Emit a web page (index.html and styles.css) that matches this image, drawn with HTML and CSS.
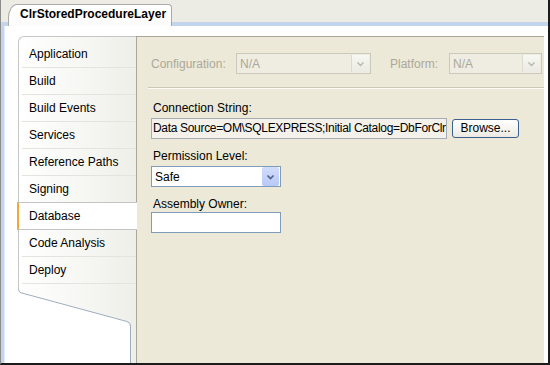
FILE: index.html
```html
<!DOCTYPE html>
<html>
<head>
    <title>ClrStoredProcedureLayer</title>
    <link rel="stylesheet" href="styles.css">
</head>
<body>
    <div class="window">
        <div class="doc-tabs">
            <div class="doc-tab">ClrStoredProcedureLayer</div>
        </div>

        <div class="doc">
            <div class="pages">
                <div class="side">
                    <div class="side-list">
                        <div class="side-item">Application</div>
                        <div class="side-item">Build</div>
                        <div class="side-item">Build Events</div>
                        <div class="side-item">Services</div>
                        <div class="side-item">Reference Paths</div>
                        <div class="side-item">Signing</div>
                        <div class="side-item selected">Database</div>
                        <div class="side-item">Code Analysis</div>
                        <div class="side-item">Deploy</div>
                    </div>
                    <div class="side-tail">
                        <svg width="118" height="100" viewBox="0 0 118 100">
                            <defs>
                                <linearGradient id="sideGrad" x1="0" y1="0" x2="1" y2="0">
                                    <stop offset="0" stop-color="#ffffff"/>
                                    <stop offset="1" stop-color="#efefe9"/>
                                </linearGradient>
                            </defs>
                            <path d="M0 0 H118 V100 H112.5 V42 Q112.5 38.5 109 37.5 L3 8.8 Q0 8 0 5 Z" fill="url(#sideGrad)"/>
                            <path d="M0.5 0 V5" stroke="#c6c6c6" fill="none"/>
                            <path d="M0.5 5 Q0.5 8 3 8.8 L109 37.5 Q112.5 38.5 112.5 42 V100" stroke="#9fadc0" fill="none"/>
                        </svg>
                    </div>
                </div>

                <div class="panel">
                    <div class="config-row muted">
                        <span class="config-label">Configuration:</span>
                        <div class="combo disabled config-combo">
                            <span class="combo-text">N/A</span>
                            <span class="combo-btn">
                                <svg width="9" height="6" viewBox="0 0 9 6"><path d="M1.5 1.5 L4.5 4.5 L7.5 1.5" stroke="#b9b7ab" stroke-width="1.4" fill="none"/></svg>
                            </span>
                        </div>
                        <span class="platform-label">Platform:</span>
                        <div class="combo disabled platform-combo">
                            <span class="combo-text">N/A</span>
                            <span class="combo-btn">
                                <svg width="9" height="6" viewBox="0 0 9 6"><path d="M1.5 1.5 L4.5 4.5 L7.5 1.5" stroke="#b9b7ab" stroke-width="1.4" fill="none"/></svg>
                            </span>
                        </div>
                    </div>

                    <div class="rule"></div>

                    <div class="form">
                        <div class="group">
                            <div class="field-label">Connection String:</div>
                            <div class="conn-row">
                                <div class="textbox conn">Data Source=OM\SQLEXPRESS;Initial Catalog=DbForClr</div>
                                <button class="browse">Browse...</button>
                            </div>
                        </div>

                        <div class="group">
                            <div class="field-label">Permission Level:</div>
                            <div class="combo safe">
                                <span class="combo-text">Safe</span>
                                <span class="combo-btn">
                                    <svg width="9" height="6" viewBox="0 0 9 6"><path d="M1.5 1.5 L4.5 4.5 L7.5 1.5" stroke="#4d6185" stroke-width="1.6" fill="none"/></svg>
                                </span>
                            </div>
                        </div>

                        <div class="group">
                            <div class="field-label owner-label">Assembly Owner:</div>
                            <div class="textbox owner"></div>
                        </div>
                    </div>
                </div>
            </div>
        </div>
    </div>
</body>
</html>
```

FILE: styles.css
```css
body {
    margin: 0;
    font-family: "Liberation Sans", Arial, sans-serif;
    font-size: 12px;
    color: #000;
}
.window {
    width: 550px;
    height: 365px;
    box-sizing: border-box;
    border-left: 1px solid #8c8c8c;
    border-right: 2px solid #1c1c1c;
    border-bottom: 2px solid #1c1c1c;
    background: #ecebe4;
    display: flex;
    flex-direction: column;
    overflow: hidden;
}
.doc-tabs {
    height: 22px;
    flex-shrink: 0;
    padding-left: 7px;
    display: flex;
    align-items: flex-end;
}
.doc-tab {
    position: relative;
    z-index: 1;
    width: 164px;
    height: 22px;
    margin-bottom: -4px;
    box-sizing: border-box;
    padding: 2px 0 0 11px;
    border: 1px solid #a9a9a9;
    border-bottom: none;
    border-radius: 9px 4px 0 0 / 14px 4px 0 0;
    background: linear-gradient(#ffffff, #fbfbfb);
    font-weight: bold;
    line-height: 14px;
    white-space: nowrap;
}
.doc {
    flex: 1;
    display: flex;
    min-height: 0;
    background: #fff;
    border-top: 4px solid #c3d5ed;
    border-left: 3px solid #c3d5ed;
    box-shadow: inset 1px 0 0 #e3ebf6;
    padding: 10px 4px 0 14px;
}
.pages {
    flex: 1;
    display: flex;
    min-height: 0;
}

/* left page list */
.side {
    width: 118px;
    flex-shrink: 0;
    display: flex;
    flex-direction: column;
}
.side-list {
    border-left: 1px solid #c6c6c6;
    border-top: 1px solid #c6c6c6;
    border-top-left-radius: 6px;
    background: linear-gradient(to right, #ffffff, #efefe9);
    padding-top: 4px;
}
.side-item {
    height: 26px;
    line-height: 26px;
    margin-left: 3px;
    padding-left: 7px;
    border-bottom: 1px solid #e4e4de;
    white-space: nowrap;
}
.side-item.selected {
    position: relative;
    z-index: 1;
    margin: -1px -1px 0 -2px;
    padding-left: 10px;
    background: #fff;
    border-top: 1px solid #c4c4c4;
    border-bottom: 1px solid #c4c4c4;
    border-left: 2px solid #f2a73a;
}
.side-tail {
    flex: 1;
    overflow: hidden;
}
.side-tail svg {
    display: block;
}

/* right panel */
.panel {
    flex: 1;
    background: #ece9d8;
    border-left: 1px solid #a7a698;
    border-top: 1px solid #a7a698;
}
.muted {
    color: #aca899;
}
.config-row {
    display: flex;
    align-items: center;
    padding: 16px 0 0 14px;
    height: 21px;
}
.config-label {
    width: 85px;
}
.platform-label {
    width: 59px;
    margin-left: 19px;
}
.combo {
    height: 21px;
    box-sizing: border-box;
    display: flex;
    align-items: center;
}
.combo-text {
    flex: 1;
    padding-left: 3px;
}
.combo-btn {
    width: 17px;
    height: 17px;
    margin-right: 1px;
    display: flex;
    align-items: center;
    justify-content: center;
}
.combo.disabled {
    border: 1px solid #cbc9bc;
    background: #efede2;
}
.combo.disabled .combo-btn {
    background: linear-gradient(#f7f7f3, #ebeae3);
    border-left: 1px solid #dddbd0;
}
.config-combo {
    width: 135px;
}
.platform-combo {
    width: 93px;
}
.rule {
    margin: 13px 0 0 11px;
    border-top: 1px solid #cbc8b8;
    border-bottom: 1px solid #fbfaf6;
}
.form {
    padding: 12px 0 0 14px;
}
.group + .group {
    margin-top: 10px;
}
.field-label {
    line-height: 14px;
    padding-left: 2px;
    margin-bottom: 3px;
}
.conn-row {
    display: flex;
    align-items: center;
    gap: 5px;
}
.textbox {
    height: 21px;
    box-sizing: border-box;
    line-height: 19px;
    white-space: nowrap;
    overflow: hidden;
}
.conn {
    width: 296px;
    padding-left: 1px;
    border: 1px solid #a5acb5;
    background: #f3f1ea;
    letter-spacing: -0.32px;
}
.browse {
    width: 67px;
    height: 19px;
    padding: 0;
    border: 1px solid #3d5f8e;
    border-radius: 3px;
    background: linear-gradient(#ffffff, #eceae2);
    font-family: inherit;
    font-size: 12px;
    line-height: 17px;
    color: #000;
}
.combo.safe {
    width: 130px;
    border: 1px solid #7f9db9;
    background: #fff;
}
.combo.safe .combo-btn {
    height: 19px;
    background: linear-gradient(#d2ddfb, #b7c9f7);
    border-radius: 2px;
}
.owner-label {
    margin-bottom: 1px;
}
.owner {
    width: 130px;
    border: 1px solid #7f9db9;
    background: #fff;
}
```
